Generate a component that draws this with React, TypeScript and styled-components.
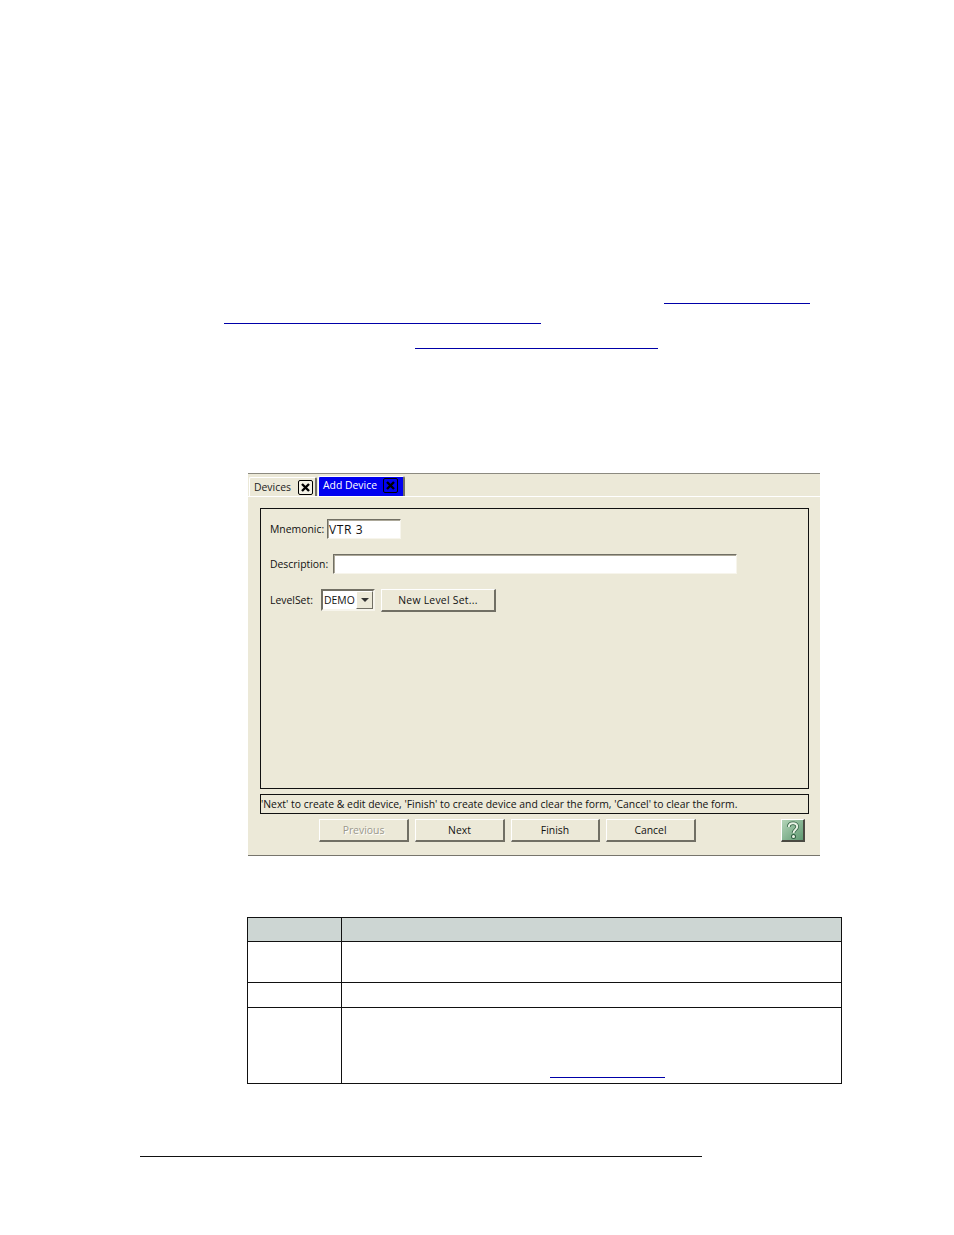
import React from 'react';
import styled, { createGlobalStyle } from 'styled-components';

const GlobalStyle = createGlobalStyle`
  html, body {
    margin: 0;
    padding: 0;
    background: #fff;
  }
`;

const Page = styled.div`
  width: 954px;
  height: 1235px;
  padding-top: 303px;
  box-sizing: border-box;
  overflow: hidden;
  background: #fff;
`;

const LinkRule = styled.div<{ $left: number; $width: number; $top: number }>`
  height: 1px;
  background: #0000a8;
  margin-left: ${(p) => p.$left}px;
  margin-top: ${(p) => p.$top}px;
  width: ${(p) => p.$width}px;
`;

const Window = styled.div`
  margin: 124px 0 0 248px;
  width: 572px;
  height: 383px;
  box-sizing: border-box;
  display: flex;
  flex-direction: column;
  background: #ece9d8;
  border-top: 1px solid #8c8a80;
  border-bottom: 1px solid #77756c;
  font-family: 'Open Sans', 'Liberation Sans', sans-serif;
  font-size: 10.4px;
  color: #111;
`;

const TabStrip = styled.div`
  height: 23px;
  flex: none;
  display: flex;
  align-items: flex-end;
  gap: 1px;
  padding-left: 1px;
  box-sizing: border-box;
  border-bottom: 1px solid #fff;
`;

const Tab = styled.div<{ $active?: boolean }>`
  height: ${(p) => (p.$active ? 20 : 19)}px;
  display: flex;
  align-items: center;
  box-sizing: border-box;
  background: ${(p) => (p.$active ? '#0000f0' : '#ece9d8')};
  color: ${(p) => (p.$active ? '#fff' : '#222')};
  border-top: 1px solid #fff;
  border-left: 1px solid #fff;
  border-right: 2px solid #716f64;
  border-radius: 2px 2px 0 0;
  padding: ${(p) => (p.$active ? '0 5px 3px 4px' : '0 2px 0 4px')};
  width: ${(p) => (p.$active ? 87 : 68)}px;
  justify-content: space-between;
`;

const CloseBox = styled.svg`
  width: 15px;
  height: 15px;
  flex: none;
`;

const Body = styled.div`
  flex: 1;
  display: flex;
  flex-direction: column;
  padding: 11px 11px 0 12px;
`;

const GroupBox = styled.div`
  height: 281px;
  box-sizing: border-box;
  border: 1px solid #111;
  padding: 10px 9px;
  display: flex;
  flex-direction: column;
  gap: 15px;
`;

const FieldRow = styled.div`
  display: flex;
  align-items: center;
  gap: 6px;
`;

const FieldLabel = styled.span<{ $width: number }>`
  width: ${(p) => p.$width}px;
  white-space: nowrap;
`;

const TextField = styled.div<{ $width: number }>`
  width: ${(p) => p.$width}px;
  height: 20px;
  box-sizing: border-box;
  background: #fff;
  border: 1px solid;
  border-color: #716f64 #f7f5ec #f7f5ec #716f64;
  box-shadow: inset 1px 1px 0 #aca899;
  padding-left: 1px;
  display: flex;
  align-items: center;
  font-size: 12px;
  letter-spacing: 0.6px;
`;

const Select = styled.div`
  width: 54px;
  height: 22px;
  box-sizing: border-box;
  background: #fff;
  border: 2px solid;
  border-color: #716f64 #f7f5ec #f7f5ec #716f64;
  display: flex;
  align-items: center;
  justify-content: space-between;
  padding-left: 1px;
  font-size: 10.4px;
`;

const SelectArrow = styled.div`
  width: 17px;
  height: 18px;
  box-sizing: border-box;
  background: #ece9d8;
  border: 1px solid;
  border-color: #fff #716f64 #716f64 #fff;
  display: flex;
  align-items: center;
  justify-content: center;
  &::after {
    content: '';
    border-left: 4px solid transparent;
    border-right: 4px solid transparent;
    border-top: 4px solid #333;
  }
`;

const Button = styled.div<{ $width: number; $disabled?: boolean }>`
  width: ${(p) => p.$width}px;
  flex: none;
  height: 23px;
  box-sizing: border-box;
  border-top: 1px solid #fff;
  border-left: 1px solid #fff;
  border-right: 2px solid #716f64;
  border-bottom: 2px solid #716f64;
  display: flex;
  align-items: center;
  justify-content: center;
  color: ${(p) => (p.$disabled ? '#9a988c' : '#111')};
  text-shadow: ${(p) => (p.$disabled ? '1px 1px 0 #fff' : 'none')};
`;

const LevelSetButton = styled(Button)`
  margin-bottom: -1px;
  letter-spacing: 0.25px;
`;

const HintBar = styled.div`
  margin-top: 5px;
  height: 20px;
  box-sizing: border-box;
  border: 1px solid #111;
  display: flex;
  align-items: center;
  white-space: nowrap;
`;

const ButtonRow = styled.div`
  margin-top: 5px;
  display: flex;
  gap: 6px;
  padding-left: 59px;
`;

const HelpButton = styled.div`
  margin-left: 79px;
  width: 24px;
  height: 23px;
  flex: none;
  box-sizing: border-box;
  border-top: 1px solid #fff;
  border-left: 1px solid #fff;
  border-right: 2px solid #4a4a42;
  border-bottom: 2px solid #4a4a42;
  background: linear-gradient(135deg, #b4d4b8, #5f9a72);
  display: flex;
  align-items: center;
  justify-content: center;
`;

const ParamTable = styled.table`
  margin: 61px 0 0 247px;
  width: 595px;
  border-collapse: collapse;
  table-layout: fixed;
`;

const NameCol = styled.col`
  width: 94px;
`;

const HeadCell = styled.th`
  height: 23px;
  padding: 0;
  background: #cdd6d3;
  border: 1px solid #111;
`;

const Cell = styled.td<{ $height: number }>`
  height: ${(p) => p.$height}px;
  padding: 0;
  border: 1px solid #111;
  vertical-align: bottom;
`;

const CellRule = styled.div`
  width: 115px;
  height: 1px;
  margin: 0 0 5px 208px;
  background: #0000a8;
`;

const FooterRule = styled.div`
  margin: 72px 0 0 140px;
  width: 562px;
  height: 1px;
  background: #111;
`;

const CloseIcon = ({ dark }: { dark?: boolean }) => (
  <CloseBox viewBox="0 0 15 15">
    <rect
      x="0.5"
      y="0.5"
      width="14"
      height="14"
      rx="1.5"
      fill={dark ? 'none' : '#f4f2e6'}
      stroke="#000"
    />
    <path d="M4 4l7 7M11 4l-7 7" stroke="#000" strokeWidth="2.4" />
  </CloseBox>
);

const QUESTION_HOOK = 'M2.8 6C2.8 3.4 4.7 2.2 7 2.2s4.2 1.3 4.2 3.6c0 2.9-3.7 3-3.7 6.2';

const HelpIcon = () => (
  <svg width="14" height="19" viewBox="0 0 14 19">
    <path d={QUESTION_HOOK} fill="none" stroke="#2f5c40" strokeWidth="3.4" />
    <circle cx="7.5" cy="15.6" r="2.5" fill="#2f5c40" />
    <path d={QUESTION_HOOK} fill="none" stroke="#eaf4e6" strokeWidth="2" />
    <circle cx="7.5" cy="15.6" r="1.5" fill="#eaf4e6" />
  </svg>
);

export default function App() {
  return (
    <Page>
      <GlobalStyle />
      <LinkRule $left={664} $width={146} $top={0} />
      <LinkRule $left={224} $width={317} $top={19} />
      <LinkRule $left={415} $width={243} $top={24} />

      <Window>
        <TabStrip>
          <Tab>
            Devices
            <CloseIcon />
          </Tab>
          <Tab $active>
            Add Device
            <CloseIcon dark />
          </Tab>
        </TabStrip>
        <Body>
          <GroupBox>
            <FieldRow>
              <FieldLabel $width={51}>Mnemonic:</FieldLabel>
              <TextField $width={74}>VTR 3</TextField>
            </FieldRow>
            <FieldRow>
              <FieldLabel $width={57}>Description:</FieldLabel>
              <TextField $width={404} />
            </FieldRow>
            <FieldRow>
              <FieldLabel $width={45}>LevelSet:</FieldLabel>
              <Select>
                DEMO
                <SelectArrow />
              </Select>
              <LevelSetButton $width={115}>New Level Set...</LevelSetButton>
            </FieldRow>
          </GroupBox>
          <HintBar>
            'Next' to create &amp; edit device, 'Finish' to create device and clear the form, 'Cancel' to clear the form.
          </HintBar>
          <ButtonRow>
            <Button $width={90} $disabled>
              Previous
            </Button>
            <Button $width={90}>Next</Button>
            <Button $width={89}>Finish</Button>
            <Button $width={90}>Cancel</Button>
            <HelpButton>
              <HelpIcon />
            </HelpButton>
          </ButtonRow>
        </Body>
      </Window>

      <ParamTable>
        <colgroup>
          <NameCol />
          <col />
        </colgroup>
        <thead>
          <tr>
            <HeadCell />
            <HeadCell />
          </tr>
        </thead>
        <tbody>
          <tr>
            <Cell $height={40} />
            <Cell $height={40} />
          </tr>
          <tr>
            <Cell $height={24} />
            <Cell $height={24} />
          </tr>
          <tr>
            <Cell $height={75} />
            <Cell $height={75}>
              <CellRule />
            </Cell>
          </tr>
        </tbody>
      </ParamTable>

      <FooterRule />
    </Page>
  );
}
